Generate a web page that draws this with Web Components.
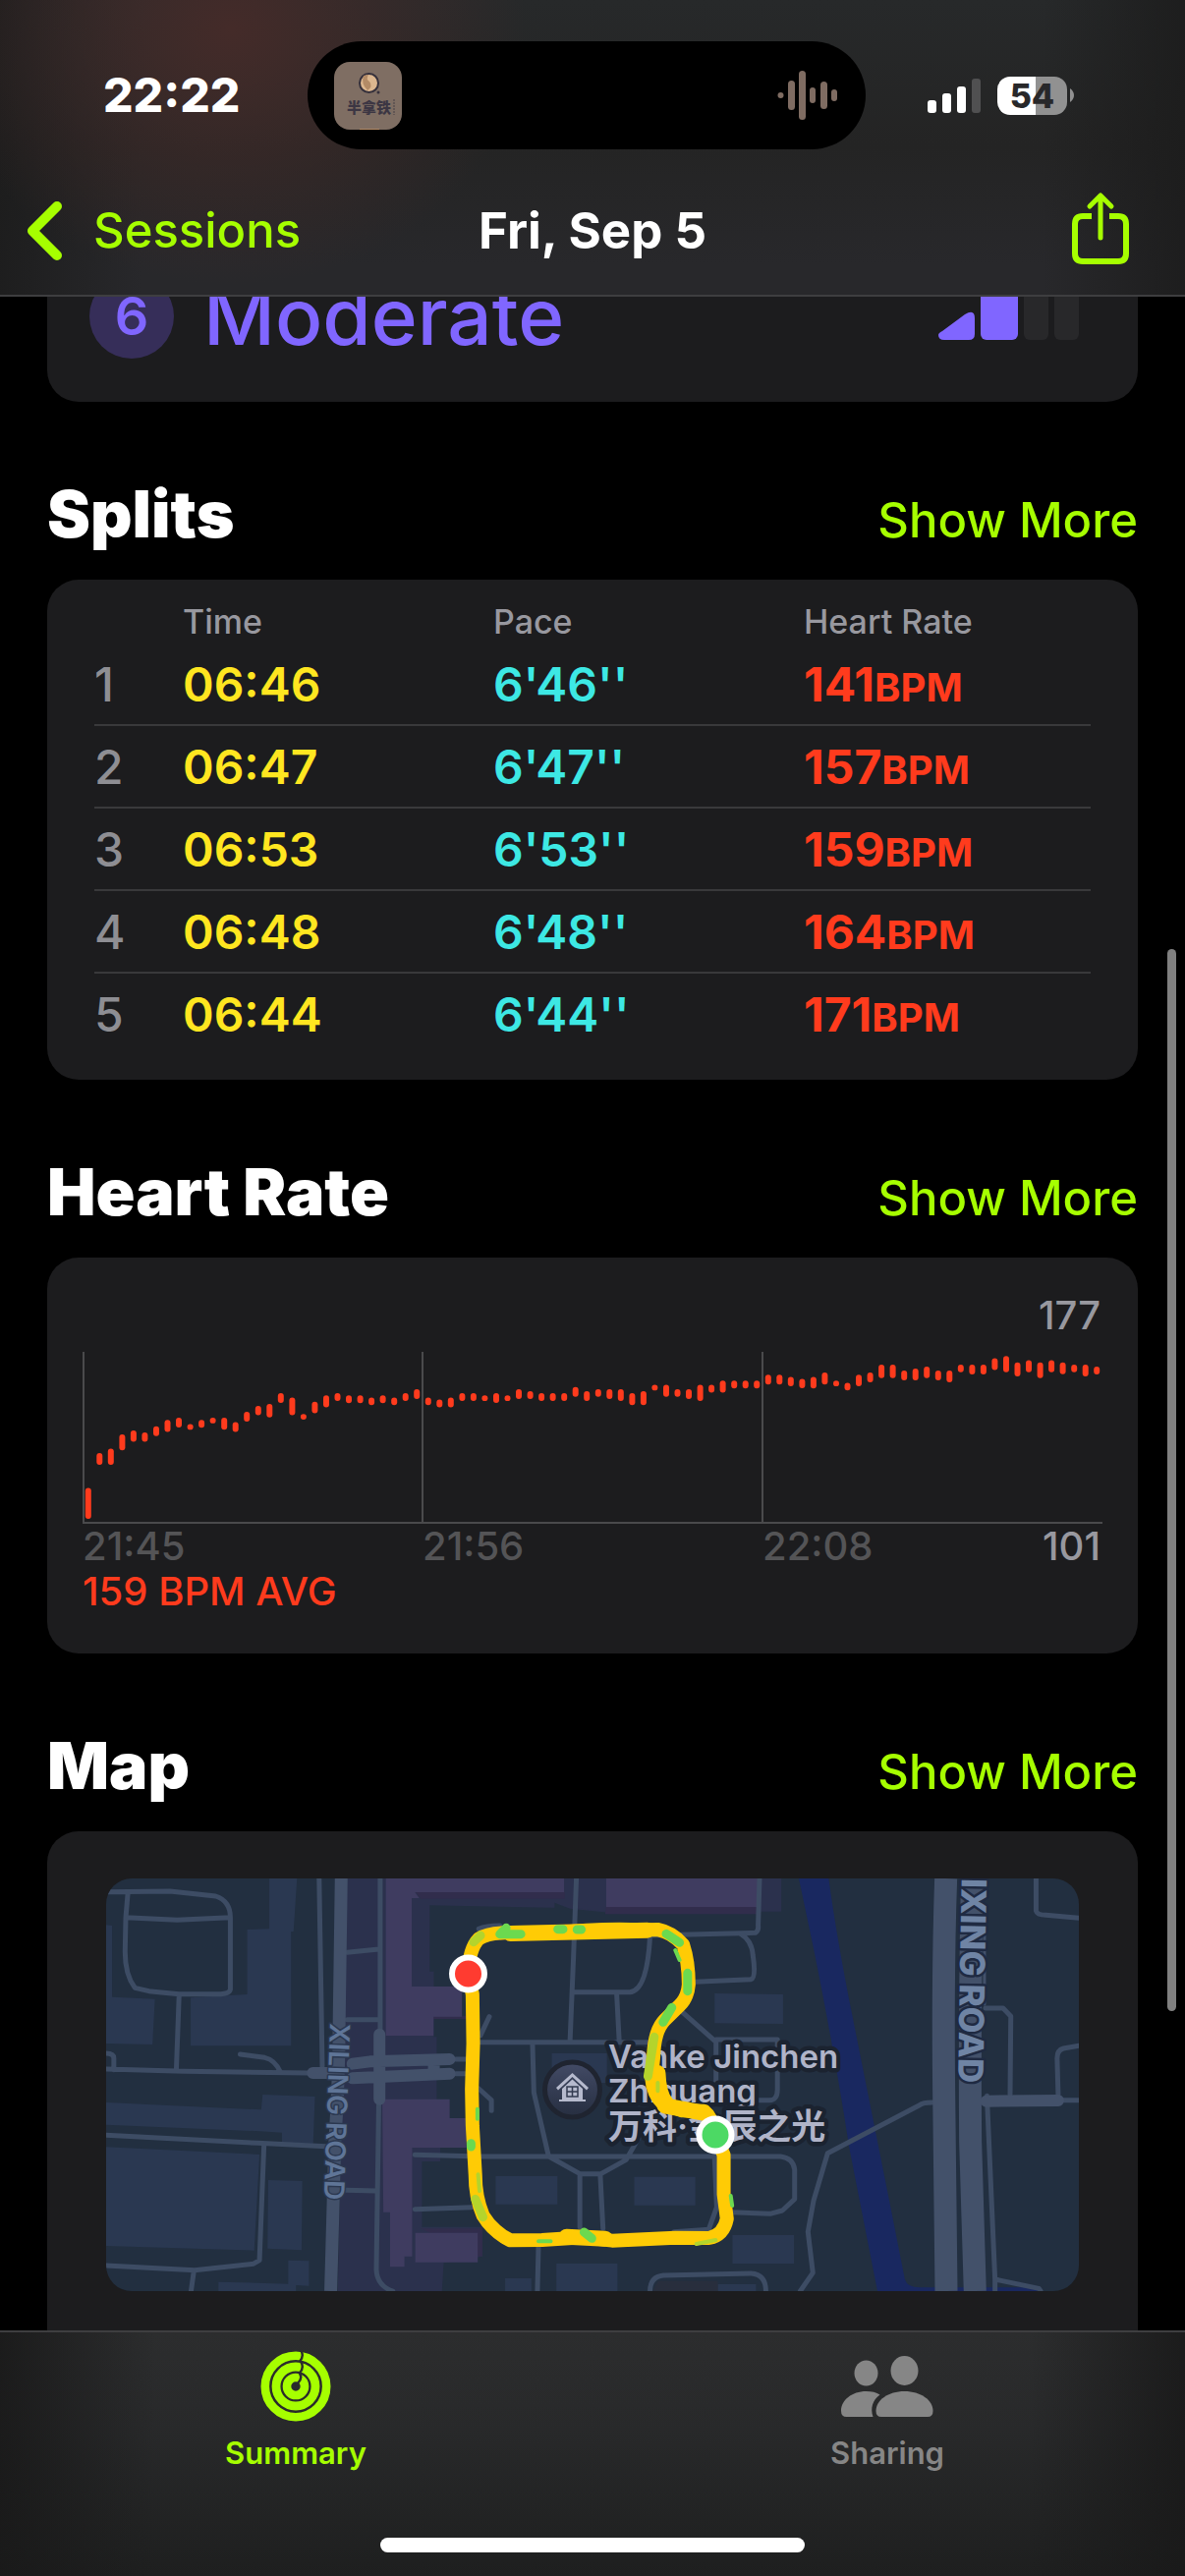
<!DOCTYPE html>
<html lang="en">
<head>
<meta charset="utf-8">
<meta name="viewport" content="width=device-width, initial-scale=1">
<title>Fri, Sep 5</title>
<style>
  :root {
    --accent: #a6ff00;
    --card: #1c1c1e;
    --red: #ff3b1d;
    --gray: #98989f;
    --violet: #8066ff;
  }
  html, body { height: 100%; }
  body {
    margin: 0;
    background: #000;
    color: #fff;
    font-family: Inter, "Noto Sans CJK SC", sans-serif;
    font-weight: 500;
  }
</style>
</head>
<body>
<workout-screen>
  <status-bar slot="top"></status-bar>
  <nav-bar slot="top" back="Sessions">Fri, Sep 5</nav-bar>
  <effort-card level="6">Moderate</effort-card>
  <section-head>Splits</section-head>
  <splits-card></splits-card>
  <section-head>Heart Rate</section-head>
  <heart-card></heart-card>
  <section-head>Map</section-head>
  <map-card></map-card>
  <tab-bar slot="bottom"></tab-bar>
</workout-screen>

<script>
const define = (name, markup, setup) => {
  const template = document.createElement('template');
  template.innerHTML = markup;
  customElements.define(name, class extends HTMLElement {
    constructor() {
      super();
      this.attachShadow({ mode: 'open' }).append(template.content.cloneNode(true));
    }
    connectedCallback() { if (setup) setup(this, this.shadowRoot); }
  });
};

define('workout-screen', `
  <style>
    :host { display: flex; flex-direction: column; height: 100vh; overflow: hidden; position: relative; }
    header {
      position: relative; z-index: 1; flex: none; padding-bottom: 24px;
      border-bottom: 2px solid #3e3e40;
      background:
        radial-gradient(300px 260px at 235px 30px, #442b29, #442b2900),
        linear-gradient(90deg, #1c1c1cdd, #1c1c1c00 12%, #1c1c1c00 88%, #1c1c1cdd),
        linear-gradient(#27292a, #242424 50%, #28282b 90%);
    }
    main { flex: 1; min-height: 0; overflow: hidden; margin-top: -60px; padding: 0 48px; }
    .thumb { position: absolute; right: 9px; top: 966px; width: 9px; height: 1081px; border-radius: 5px; background: #808080; }
  </style>
  <header><slot name="top"></slot></header>
  <main><slot></slot></main>
  <slot name="bottom"></slot>
  <div class="thumb"></div>
`);

define('status-bar', `
  <style>
    :host { display: grid; grid-template-columns: 313fr 568px 325fr; align-items: center; height: 194px; }
    time { padding-left: 105px; font-size: 48px; line-height: 56px; font-weight: 800; }
    .island { display: flex; align-items: center; justify-content: space-between; height: 110px; border-radius: 55px; background: #000; padding: 0 28px 0 27px; box-sizing: border-box; }
    svg { display: block; }
    .right { display: flex; align-items: center; gap: 17px; padding-left: 63px; }
    .battery { display: flex; align-items: center; gap: 3px; }
    .cell { width: 71px; height: 39px; border-radius: 13px; background: linear-gradient(90deg, #fff 55%, #919191 55%); color: #28282a; font-size: 34px; line-height: 39px; font-weight: 800; text-align: center; }
  </style>
  <time>22:22</time>
  <div class="island">
    <svg width="69" height="69" viewBox="0 0 69 69">
      <rect width="69" height="69" rx="16" fill="#7f6e63"/>
      <circle cx="35.500" cy="21.500" r="9.500" fill="#dcb78f" stroke="#35303b" stroke-width="2"/>
      <path d="M30 14q-3 8 4 15q6-4 2-9q-4-2-1-7z" fill="#b38b66"/>
      <circle cx="45" cy="31" r="1.500" fill="#35303b"/>
      <text x="13" y="52" font-size="15" font-weight="900" font-family="Noto Sans CJK SC, sans-serif" fill="#3c3643">半拿铁</text>
      <path d="M61 38v16" stroke="#5a4f50" stroke-width="1.500" stroke-dasharray="2 1"/>
      <path d="M26 68.500h20" stroke="#b38b66"/>
    </svg>
    <svg width="62" height="52" viewBox="0 0 62 52" fill="#7f6c62">
      <circle cx="3.500" cy="26" r="3"/>
      <rect x="11" y="11" width="7" height="30" rx="3.500"/>
      <rect x="22" y="1" width="7" height="50" rx="3.500"/>
      <rect x="33" y="18" width="6" height="16" rx="3"/>
      <rect x="44" y="12" width="7" height="28" rx="3.500"/>
      <rect x="55" y="20" width="6" height="12" rx="3"/>
    </svg>
  </div>
  <div class="right">
    <svg width="54" height="36" viewBox="0 0 54 36" fill="#fff">
      <rect x="0" y="23" width="9" height="13" rx="3"/>
      <rect x="15" y="16" width="9" height="20" rx="3"/>
      <rect x="30" y="9" width="9" height="27" rx="3"/>
      <rect x="45" y="1" width="9" height="35" rx="3" fill="#505051"/>
    </svg>
    <div class="battery">
      <div class="cell">54</div>
      <svg width="4" height="14" viewBox="0 0 4 14"><path d="M0 0q4 3 4 7t-4 7z" fill="#919191"/></svg>
    </div>
  </div>
`);

define('nav-bar', `
  <style>
    :host { display: grid; grid-template-columns: 1fr auto 1fr; align-items: center; height: 82px; padding: 0 56px 0 26px; }
    button { all: unset; display: flex; align-items: center; gap: 31px; color: var(--accent); font-size: 49px; line-height: 60px; }
    .share { justify-self: end; }
    h1 { margin: 0 0 0 30px; font-size: 51px; line-height: 60px; font-weight: 700; }
    svg { display: block; fill: none; stroke: var(--accent); stroke-linecap: round; stroke-linejoin: round; }
  </style>
  <button class="back">
    <svg width="38" height="62" viewBox="0 0 38 62" stroke-width="10"><path d="M32 6L7 31L32 56"/></svg>
    <span></span>
  </button>
  <h1><slot></slot></h1>
  <button class="share" aria-label="Share">
    <svg width="60" height="80" viewBox="0 0 60 80" stroke-width="6">
      <path d="M21 25H12q-8 0-8 8V63q0 8 8 8H48q8 0 8-8V33q0-8-8-8H39" stroke-linecap="butt"/>
      <path d="M30 47V5M19 15L30 4L41 15" stroke-width="5"/>
    </svg>
  </button>
`, (host, root) => { root.querySelector('span').textContent = host.getAttribute('back'); });

define('effort-card', `
  <style>
    :host { display: flex; align-items: center; height: 167px; box-sizing: border-box; padding: 0 58px 7px 43px; border-radius: 32px; background: var(--card); color: var(--violet); }
    b { width: 86px; height: 86px; border-radius: 50%; background: #362e59; font-size: 54px; line-height: 86px; font-weight: 600; text-align: center; }
    span { flex: 1; padding-left: 30px; font-size: 80px; line-height: 86px; }
    svg { display: block; }
  </style>
  <b></b><span><slot></slot></span>
  <svg width="146" height="64" viewBox="0 0 146 64" fill="currentColor">
    <path d="M5 47L28 30q10-6 10 4V50q0 6-6 6H7q-6 0-6-5q0-2 4-4z"/>
    <rect x="44" y="0" width="38" height="56" rx="6"/>
    <rect x="88" y="0" width="25" height="56" rx="6" fill="#28282a"/>
    <rect x="119" y="0" width="25" height="56" rx="6" fill="#28282a"/>
  </svg>
`, (host, root) => { root.querySelector('b').textContent = host.getAttribute('level'); });

define('section-head', `
  <style>
    :host { display: flex; align-items: baseline; justify-content: space-between; padding: 74px 0 27px; }
    h2 { margin: 0; font-size: 66px; line-height: 80px; font-weight: 900; }
    a { color: var(--accent); font-size: 49px; line-height: 60px; text-decoration: none; }
  </style>
  <h2><slot></slot></h2>
  <a href="#">Show More</a>
`);

const SPLITS = [
  ['06:46', "6'46''", 141], ['06:47', "6'47''", 157], ['06:53', "6'53''", 159],
  ['06:48', "6'48''", 164], ['06:44', "6'44''", 171],
];
define('splits-card', `
  <style>
    :host { display: block; padding: 22px 48px 24px; border-radius: 32px; background: var(--card); }
    table { width: 100%; border-collapse: separate; border-spacing: 0; table-layout: fixed; }
    th, td { padding: 0; text-align: left; }
    thead th { height: 43px; font-size: 34px; line-height: 42px; font-weight: 500; color: var(--gray); vertical-align: top; }
    thead th:first-child { width: 90px; }
    thead th:not(:first-child) { width: 316px; }
    thead th:last-child { width: auto; }
    tbody th, td { height: 80px; padding-top: 2px; border-bottom: 2px solid #39393b; font-size: 48px; line-height: 60px; font-weight: 600; }
    tbody tr:last-child > * { border-color: transparent; }
    tbody th { color: #8e8e93; font-weight: 500; }
    .time { color: #ffe620; }
    .pace { color: #3de8e4; }
    .rate { color: var(--red); font-weight: 700; }
    small { font-size: 40px; line-height: 0; }
  </style>
  <table>
    <thead><tr><th></th><th>Time</th><th>Pace</th><th>Heart Rate</th></tr></thead>
    <tbody></tbody>
  </table>
`, (host, root) => {
  root.querySelector('tbody').innerHTML = SPLITS.map(([time, pace, rate], i) =>
    `<tr><th>${i + 1}</th><td class="time">${time}</td><td class="pace">${pace}</td><td class="rate">${rate}<small>BPM</small></td></tr>`).join('');
});

// Top and bottom of each reading bar, in chart units (490 units from top to axis).
const READINGS = [
  388,476, 288,322, 276,322, 235,281, 224,256, 230,256, 212,240, 194,228, 188,216, 206,222,
  194,216, 188,204, 188,222, 200,228, 171,199, 154,181, 148,187, 118,146, 130,181, 177,193,
  142,175, 124,158, 118,140, 124,146, 124,146, 130,152, 124,146, 130,152, 118,140, 106,134,
  130,152, 136,158, 130,158, 118,140, 118,140, 124,140, 118,146, 124,140, 106,134, 112,134,
  118,140, 118,140, 118,140, 100,128, 112,140, 106,128, 106,134, 106,140, 118,152, 112,152,
  94,110, 94,128, 106,128, 106,134, 94,140, 94,116, 82,116, 82,104, 82,104, 82,104,
  65,93, 65,93, 71,98, 77,104, 71,104, 59,93, 82,98, 88,110, 65,98, 59,87,
  36,75, 36,75, 53,81, 48,81, 42,75, 53,81, 53,87, 36,58, 36,64, 36,64,
  18,52, 12,58, 30,70, 24,58, 30,75, 24,58, 30,64, 36,58, 36,70, 42,64,
];
define('heart-card', `
  <style>
    :host { display: block; padding: 36px 36px 40px; border-radius: 32px; background: var(--card); font-size: 40px; line-height: 46px; color: var(--gray); }
    .max { padding-right: 2px; text-align: right; }
    svg { display: block; width: 100%; height: 175px; margin-top: 14px; }
    .axis { display: grid; grid-template-columns: 1fr 1fr 1fr; }
    .axis div { display: flex; justify-content: space-between; padding: 0 2px 0 0; }
    time { color: #545456; }
    .avg { color: var(--red); }
  </style>
  <div class="max">177</div>
  <svg viewBox="0 0 1038 175" preserveAspectRatio="none" fill="#4a4a4c">
    <rect width="2" height="174"/><rect x="345" width="2" height="174"/><rect x="691" width="2" height="174"/>
    <rect y="173" width="1038" height="2"/>
    <g class="bars" fill="#ff3b1d"></g>
  </svg>
  <div class="axis">
    <div><time>21:45</time></div><div><time>21:56</time></div><div><time>22:08</time><span>101</span></div>
  </div>
  <div class="avg">159 BPM AVG</div>
`, (host, root) => {
  const step = 1038 / 90, unit = 2.8;
  let bars = '';
  for (let i = 0; i < READINGS.length; i += 2) {
    const x = step * (i / 2 + .5) - 3, y = READINGS[i] / unit, h = (READINGS[i + 1] - READINGS[i]) / unit;
    bars += `<rect x="${x.toFixed(1)}" y="${y.toFixed(1)}" width="6" height="${h.toFixed(1)}" rx="3"/>`;
  }
  root.querySelector('.bars').innerHTML = bars;
});

define('map-card', `
  <style>
    :host { display: block; padding: 48px 60px; border-radius: 32px 32px 0 0; background: var(--card); }
    .map { display: grid; border-radius: 26px; overflow: hidden; background: #222f40; aspect-ratio: 990 / 420; }
    .map > svg { grid-area: 1 / 1; width: 100%; height: 100%; display: block; min-width: 0; min-height: 0; }
    .lines * { vector-effect: non-scaling-stroke; }
    .lines { fill: none; stroke-linejoin: round; stroke-linecap: round; }
    text { font-family: Inter, "Noto Sans CJK SC", sans-serif; paint-order: stroke; stroke-linejoin: round; }
  </style>
  <div class="map">
    <svg class="ground" viewBox="78 96 2772 1260" preserveAspectRatio="none">
      <path fill="#2b314d" d="M765 96H1510V200L1400 188L1356 170V185L1000 178V380H1012V580H1020V770H1030V960H978V1160H1150V1250L1040 1270L1035 1356H738z"/>
      <path fill="#2b314d" d="M1410 96H2002V197H1500L1410 186z"/>
      <path fill="#312d4c" d="M960 138H1385V158H975zM1503 180H1935V205H1500zM938 515H1105V525H945zM975 1165H1150V1250H1138z"/>
      <path fill="#3f3c60" d="M875 96H1383V138H958L970 156H949V426H1092V518H1011V576H875zM1503 96H1935V183H1503zM865 770H1057V828H1105V918H950V1250H928V1282H887V1115H868zM959 1178H1137V1268H959z"/>
      <path fill="#2a3851" d="M543 96H622L612 258H605V607H319V460L480 450V252L543 250zM78 238L95 240V458L217 464L210 603L78 600zM78 780L520 802L524 756L673 762L668 906L579 902V872L518 868L78 848zM78 916L515 939L500 1232L78 1218zM540 1017L637 1020L635 1231L538 1226zM597 1262L656 1264V1340L619 1338V1356H398V1328L597 1334zM1188 1005H1364V1091H1188zM1348 630H1505V720H1348zM1361 1272H1535V1356H1361zM1215 1317H1290V1356H1215z"/>
      <g transform="translate(1456 0)">
        <path fill="#2a3851" d="M356 447L551 450V540L356 538zM127 1007H301V1094H127zM407 1185H582V1272H407zM365 1335H474V1356H365z"/>
        <path fill="#282e3d" d="M195 1325H365V1356H180z"/>
        <path fill="#192860" d="M596 96H681Q700 250 740 470L850 1060L898 1320Q905 1345 940 1345H1240L1290 1356H820L740 920Q700 640 640 320z"/>
      </g>
      <g class="lines" stroke="#3d4c64" stroke-width="5">
        <path d="M78 137L260 135L390 150Q432 165 432 215V435Q430 447 405 449L285 449L200 440L160 430Q132 390 132 320L134 215L140 140M134 215L280 223L432 215M286 450L278 682M78 678L300 685L655 690M78 630Q100 630 100 645V680M460 633L530 643Q560 650 575 688M78 880L510 904L705 914M528 906L515 1262L497 1273L330 1292L78 1278M328 1295L320 1356"/>
        <path d="M685 96L694 670M859 96V560M765 322L855 312M765 527H855M855 780L848 1290Q850 1340 895 1356M762 1048L848 1050M1418 96L1410 330L1400 590M1410 443H1570Q1620 440 1628 270L1928 262Q1938 255 1936 240L1940 96M1533 450L1540 590M1145 596H1640M1145 575L1170 518M1140 738L1176 773V805M1293 600L1297 750L1338 940M958 940L1145 945H2000Q2036 950 2040 985V1075L2005 1110L1970 1120L1860 1115M958 1106L1120 1100M1340 945L1428 998H1488L1560 955L1600 880M1428 1000V1160M1486 1000L1494 1165M1140 250Q1160 240 1200 240M1310 1220L1307 1356M1075 648H1105M1075 692H1105"/>
        <g transform="translate(1456 0)">
          <path d="M430 265Q462 285 465 330Q475 400 460 404L300 412M265 505L360 595V720M360 588H535V740Q535 775 510 773H470M355 930L362 1100L340 1165M240 1175L340 1168M975 780Q950 780 940 788L678 935L638 1080L622 1175L636 1300L600 1356M172 1356Q172 1312 210 1308L460 1302Q502 1305 502 1356M1272 96V195Q1275 208 1300 208L1394 217M1128 492H1178L1200 517L1198 755M1394 607L1350 615Q1332 620 1332 645L1335 755M1350 773H1394M1132 760L1155 1320V1356M1155 1320L1280 1348L1285 1356"/>
        </g>
        <g stroke="#43516a">
          <path stroke-width="13" d="M748 96L742 540Q742 700 730 900L718 1356" stroke-linecap="butt"/>
          <path stroke-width="12" d="M857 572V770M667 690H715M780 662L830 655L1057 648M780 706L1057 692M1012 650V690"/>
          <g transform="translate(1456 0)">
            <path stroke-width="23" stroke-linecap="butt" d="M1015 96Q1005 400 1010 800L1016 1356M1090 96Q1082 500 1085 900L1098 1356"/>
            <path stroke-width="3" d="M1125 200V480"/>
            <path stroke-width="12" d="M1130 776L1335 774"/>
          </g>
        </g>
      </g>
    </svg>
    <svg viewBox="0 0 990 420" preserveAspectRatio="none">
      <defs><linearGradient id="pin" x2="0" y2="1"><stop stop-color="#434b66"/><stop offset="1" stop-color="#262e40"/></linearGradient></defs>
      <text transform="translate(228 147) rotate(92)" font-size="28" font-weight="600" fill="#5f7597" stroke="#2b3850" stroke-width="3">XILING ROAD</text>
      <text transform="translate(867 208) rotate(91)" text-anchor="end" font-size="35" font-weight="800" fill="#6f84a4" stroke="#1f2a42" stroke-width="5">IXING ROAD</text>
      <circle cx="474.500" cy="215" r="28" fill="url(#pin)" stroke="#1f2430" stroke-width="5"/>
      <g fill="#b6bacd">
        <path d="M458 213L474.500 198L491 213L489 215.500L474.500 202L460 215.500z"/>
        <path d="M464 214L474.500 204.500L485 214V225H488V227H461V225H464z"/>
        <path d="M469 212H480V222H469zM474.500 212V222M469 217H480" fill="none" stroke="#333b50" stroke-width="1.500"/>
      </g>
      <g font-size="33" font-weight="600" fill="#b0b4c8" stroke="#1b2330" stroke-width="9">
        <text x="511" y="193">Vanke Jinchen</text>
        <text x="511" y="228">Zhiguang</text>
        <text x="511" y="265" font-size="35">万科·金辰之光</text>
      </g>
    </svg>
    <svg class="lines" viewBox="78 96 2772 1260" preserveAspectRatio="none">
      <path stroke="#ffcb05" stroke-width="14" d="M1110 388Q1112 310 1140 280Q1165 263 1215 262L1350 262Q1450 252 1540 251L1606 253L1650 252Q1690 260 1722 298Q1738 350 1738 420Q1735 460 1712 484L1670 528Q1640 560 1638 640L1632 700Q1636 755 1664 783L1720 805L1782 806Q1805 825 1814 878L1838 940V1060L1847 1135Q1838 1185 1796 1194L1700 1193L1520 1202L1440 1192L1320 1200L1230 1201Q1180 1175 1152 1125Q1130 1070 1130 1000L1122 850L1120 740L1124 600L1122 450z"/>
      <path stroke="#ffcb05" stroke-width="16" d="M1230 264L1620 254M1650 690Q1652 755 1674 783M1390 1190L1500 1196M1670 790L1780 812"/>
      <g stroke="#6cd94f" stroke-width="9">
        <path d="M1218 247L1200 266L1260 266M1365 251H1380M1420 252H1432M1674 265L1712 292M1735 385V440M1690 490L1665 535M1118 905V915M1440 1176L1462 1195"/>
        <path stroke="#b4d42c" d="M1145 270L1125 290M1640 580L1622 700M1130 1075L1152 1130"/>
        <path stroke-width="4" d="M1136 800V830M1310 1204H1345M1700 315L1712 345M1858 1065L1862 1095"/>
        <path stroke="#b4d42c" stroke-width="4" d="M1650 720V745M1760 1212L1815 1200M1138 1000L1142 1050"/>
      </g>
    </svg>
    <svg viewBox="0 0 990 420" preserveAspectRatio="none" stroke="#fff" stroke-width="6">
      <circle cx="368.500" cy="97" r="16.500" fill="#ff3b30"/>
      <circle cx="620" cy="261" r="16.500" fill="#4cd964"/>
    </svg>
  </div>
`);

define('tab-bar', `
  <style>
    :host {
      position: relative; z-index: 1; flex: none; display: block; height: 250px; box-sizing: border-box;
      border-top: 2px solid #3e3e40;
      background:
        linear-gradient(90deg, #191919dd, #19191900 13%, #19191900 87%, #191919dd),
        linear-gradient(#2c2d2e, #28292a 40%, #1e1f1f);
    }
    nav { display: grid; grid-template-columns: 1fr 1fr; padding-right: 2px; }
    a { display: grid; justify-items: center; grid-template-rows: 72px 36px; row-gap: 14px; align-items: center; padding: 19px 0 0; color: #868686; font-size: 31px; line-height: 36px; font-weight: 600; text-decoration: none; }
    a[aria-current] { color: var(--accent); }
    svg { display: block; }
    .home { width: 432px; height: 15px; margin: 68px auto 0; border-radius: 8px; background: #fff; }
  </style>
  <nav>
    <a href="#" aria-current="page">
      <svg width="72" height="72" viewBox="-36 -36 72 72" fill="none" stroke="currentColor">
        <circle r="31.200" stroke-width="8.600"/><circle r="20" stroke-width="8.800"/><circle r="9" stroke-width="8.600"/>
        <path stroke="#2a2b2b" stroke-width="2.400" d="M5-37Q9-31 4-25.500M5-25.500Q9-19 4-14M3-14.500Q8-9 2-3"/>
      </svg>
      Summary
    </a>
    <a href="#">
      <svg width="94" height="62" viewBox="0 0 94 62" fill="currentColor">
        <ellipse cx="64.500" cy="15" rx="14" ry="15"/><ellipse cx="25.500" cy="17.500" rx="12" ry="13"/>
        <path d="M35.500 56C35.500 45 48 36 64.500 36S93.500 45 93.500 56Q93.500 62 88 62H41Q35.500 62 35.500 56z"/>
        <path d="M0 56C0 45 11 36 25.500 36C31 36 36 37 39.500 39.500C32 45 29.500 53 32.500 62H5.500Q0 62 0 56z"/>
      </svg>
      Sharing
    </a>
  </nav>
  <div class="home"></div>
`);
</script>
</body>
</html>
